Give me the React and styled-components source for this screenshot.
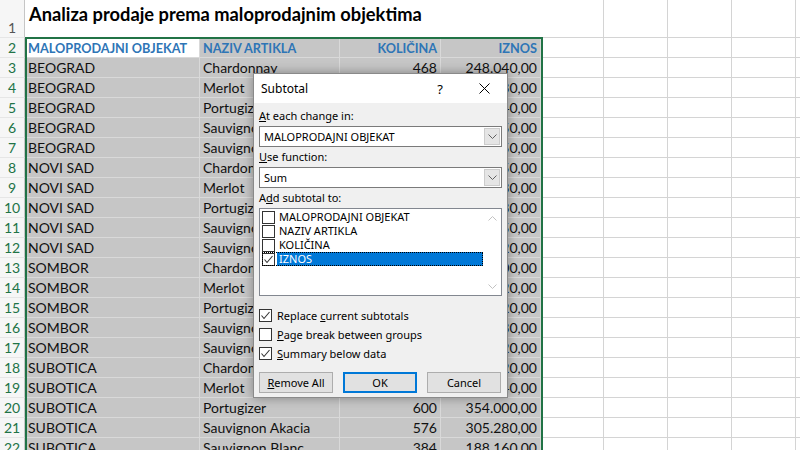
import React from 'react'
import styled, { createGlobalStyle } from 'styled-components'

const GlobalStyle = createGlobalStyle`
  html, body {
    margin: 0;
    padding: 0;
    background: #ffffff;
    overflow: hidden;
  }
`

const COLS = '25px 175px 140px 101px 100px 63px 64px 64px 64px 64px 64px'
const EMPTY_COLS = 6

const rows = [
  ['BEOGRAD', 'Chardonnay', '468', '248.040,00'],
  ['BEOGRAD', 'Merlot', '412', '218.430,00'],
  ['BEOGRAD', 'Portugizer', '380', '224.240,00'],
  ['BEOGRAD', 'Sauvignon Akacia', '520', '275.650,00'],
  ['BEOGRAD', 'Sauvignon Blanc', '330', '161.750,00'],
  ['NOVI SAD', 'Chardonnay', '420', '222.550,00'],
  ['NOVI SAD', 'Merlot', '350', '190.530,00'],
  ['NOVI SAD', 'Portugizer', '300', '177.030,00'],
  ['NOVI SAD', 'Sauvignon Akacia', '410', '217.350,00'],
  ['NOVI SAD', 'Sauvignon Blanc', '350', '171.520,00'],
  ['SOMBOR', 'Chardonnay', '380', '201.400,00'],
  ['SOMBOR', 'Merlot', '310', '170.520,00'],
  ['SOMBOR', 'Portugizer', '290', '171.120,00'],
  ['SOMBOR', 'Sauvignon Akacia', '460', '243.830,00'],
  ['SOMBOR', 'Sauvignon Blanc', '420', '205.820,00'],
  ['SUBOTICA', 'Chardonnay', '510', '270.320,00'],
  ['SUBOTICA', 'Merlot', '440', '242.440,00'],
  ['SUBOTICA', 'Portugizer', '600', '354.000,00'],
  ['SUBOTICA', 'Sauvignon Akacia', '576', '305.280,00'],
  ['SUBOTICA', 'Sauvignon Blanc', '384', '188.160,00'],
]

const Page = styled.div`
  position: relative;
  width: 800px;
  height: 450px;
  overflow: hidden;
  font-family: Lato, 'Liberation Sans', sans-serif;
`

const Sheet = styled.div`
  display: grid;
  grid-template-columns: ${COLS};
  grid-template-rows: 38px;
  grid-auto-rows: 20px;
`

const RowNum = styled.div`
  display: flex;
  align-items: ${p => (p.$tall ? 'flex-end' : 'center')};
  justify-content: center;
  padding-bottom: ${p => (p.$tall ? '1px' : '0')};
  background: #f6f6f6;
  border-right: 1px solid #c6c6c6;
  border-bottom: 1px solid #e6e6e6;
  color: ${p => (p.$selected ? '#217346' : '#555')};
  font-size: 14px;
  box-sizing: border-box;
`

const Title = styled.div`
  grid-column: span 4;
  padding: 0 4px;
  font-size: 18.3px;
  line-height: 28px;
  font-weight: 700;
  color: #000;
  white-space: nowrap;
  border-bottom: 1px solid #d4d4d4;
  box-sizing: border-box;
`

const Cell = styled.div`
  display: flex;
  align-items: center;
  justify-content: ${p => (p.$right ? 'flex-end' : 'flex-start')};
  padding: ${p => (p.$right ? '0 3px 0 0' : '0 0 0 3px')};
  background: ${p => (p.$selected ? (p.$active ? '#ffffff' : '#c6c6c6') : '#ffffff')};
  border-right: 1px solid ${p => (p.$selected ? '#d9d9d9' : '#d4d4d4')};
  border-bottom: 1px solid ${p => (p.$selected ? '#d9d9d9' : '#d4d4d4')};
  box-sizing: border-box;
  overflow: hidden;
  white-space: nowrap;
  font-size: ${p => (p.$head ? '12.7px' : '14px')};
  font-weight: ${p => (p.$head ? 700 : 400)};
  color: ${p => (p.$head ? '#2e75b6' : '#111')};
`

const Selection = styled.div`
  position: absolute;
  left: 25px;
  top: 37px;
  width: 518px;
  height: 430px;
  border: 2px solid #217346;
  box-sizing: border-box;
  pointer-events: none;
`

/* ---------- dialog ---------- */

const Dialog = styled.div`
  position: absolute;
  left: 253px;
  top: 73px;
  width: 255px;
  height: 325px;
  display: flex;
  flex-direction: column;
  border: 1px solid #8a8a8a;
  box-sizing: border-box;
  box-shadow: 0 0 10px rgba(0, 0, 0, 0.35);
  background: #f0f0f0;
  font-family: 'Noto Sans', 'Open Sans', sans-serif;
  font-size: 11px;
  color: #000;
`

const TitleBar = styled.div`
  height: 29px;
  display: flex;
  align-items: center;
  background: #ffffff;
  padding-left: 7px;
  font-size: 12px;
`

const TitleText = styled.span`
  flex: 1;
`

const TitleButton = styled.div`
  width: ${p => p.$w}px;
  display: flex;
  justify-content: center;
  align-items: center;
  font-size: 13px;
`

const Body = styled.div`
  flex: 1;
  display: flex;
  flex-direction: column;
  padding: 5px 5px 0 5px;
`

const Label = styled.div`
  height: 16px;
  line-height: 16px;
  margin-top: ${p => p.$mt || 0}px;
  margin-bottom: 2px;
`

const Combo = styled.div`
  height: 21px;
  display: flex;
  align-items: center;
  background: #fff;
  border: 1px solid #7a7a7a;
  box-sizing: border-box;
  padding: 1px;
`

const ComboText = styled.span`
  flex: 1;
  padding-left: 3px;
`

const ComboButton = styled.div`
  width: 16px;
  height: 100%;
  display: flex;
  align-items: center;
  justify-content: center;
  background: #e5e5e5;
  border: 1px solid #cccccc;
  box-sizing: border-box;
`

const ListBox = styled.div`
  height: 88px;
  display: flex;
  background: #fff;
  border: 1px solid #828790;
  box-sizing: border-box;
`

const ListItems = styled.div`
  flex: 1;
  padding: 1px 0 0 2px;
`

const ListItem = styled.div`
  height: 14px;
  display: flex;
  align-items: center;
  outline: ${p => (p.$focus ? '1px dotted #000' : 'none')};
  outline-offset: -1px;
`

const ItemText = styled.span`
  height: 14px;
  line-height: 14px;
  flex: 1;
  margin-left: 2px;
  padding-left: 2px;
  background: ${p => (p.$sel ? '#0078d7' : 'transparent')};
  color: ${p => (p.$sel ? '#fff' : '#000')};
`

const ScrollBar = styled.div`
  width: 18px;
  display: flex;
  flex-direction: column;
  justify-content: space-between;
  align-items: center;
  padding: 7px 0 6px;
`

const Box = styled.span`
  width: ${p => p.$size}px;
  height: ${p => p.$size}px;
  flex: none;
  display: flex;
  align-items: center;
  justify-content: center;
  background: #fff;
  border: 1px solid #333;
  box-sizing: border-box;
`

const CheckRow = styled.div`
  height: 19px;
  line-height: 15px;
  display: flex;
  align-items: center;
  gap: 5px;
  margin-top: ${p => p.$mt || 0}px;
`

const Buttons = styled.div`
  display: flex;
  justify-content: space-between;
  margin-top: 9px;
  padding-right: 1px;
`

const Button = styled.div`
  width: ${p => p.$w}px;
  height: 21px;
  display: flex;
  align-items: center;
  justify-content: center;
  background: #e1e1e1;
  border: ${p => (p.$default ? '2px solid #0078d7' : '1px solid #adadad')};
  box-sizing: border-box;
`

const Check = () => (
  <svg width="11" height="11" viewBox="0 0 11 11">
    <polyline points="1.5,5.5 4,8.5 9.5,2" fill="none" stroke="#333" strokeWidth="1.1" />
  </svg>
)

const CheckBox = ({ checked, size = 13 }) => (
  <Box $size={size}>{checked && <Check />}</Box>
)

const Chevron = ({ up, color = '#606060' }) => (
  <svg width="9" height="5" viewBox="0 0 9 5">
    <polyline
      points={up ? '0.5,4.5 4.5,0.5 8.5,4.5' : '0.5,0.5 4.5,4.5 8.5,0.5'}
      fill="none"
      stroke={color}
      strokeWidth="1"
    />
  </svg>
)

const listItems = [
  { label: 'MALOPRODAJNI OBJEKAT' },
  { label: 'NAZIV ARTIKLA' },
  { label: 'KOLIČINA' },
  { label: 'IZNOS', checked: true, selected: true },
]

const SubtotalDialog = () => (
  <Dialog>
    <TitleBar>
      <TitleText>Subtotal</TitleText>
      <TitleButton $w={42}>?</TitleButton>
      <TitleButton $w={46}>
        <svg width="11" height="11" viewBox="0 0 11 11">
          <path d="M0.5 0.5 L10.5 10.5 M10.5 0.5 L0.5 10.5" stroke="#000" strokeWidth="1" />
        </svg>
      </TitleButton>
    </TitleBar>
    <Body>
      <Label>
        <u>A</u>t each change in:
      </Label>
      <Combo>
        <ComboText>MALOPRODAJNI OBJEKAT</ComboText>
        <ComboButton>
          <Chevron />
        </ComboButton>
      </Combo>
      <Label $mt={2}>
        <u>U</u>se function:
      </Label>
      <Combo>
        <ComboText>Sum</ComboText>
        <ComboButton>
          <Chevron />
        </ComboButton>
      </Combo>
      <Label $mt={2}>
        A<u>d</u>d subtotal to:
      </Label>
      <ListBox>
        <ListItems>
          {listItems.map(it => (
            <ListItem key={it.label} $focus={it.selected}>
              <CheckBox checked={it.checked} size={13} />
              <ItemText $sel={it.selected}>{it.label}</ItemText>
            </ListItem>
          ))}
        </ListItems>
        <ScrollBar>
          <Chevron up color="#c2c2c2" />
          <Chevron color="#c2c2c2" />
        </ScrollBar>
      </ListBox>
      <CheckRow $mt={10}>
        <CheckBox checked />
        <span>
          Replace <u>c</u>urrent subtotals
        </span>
      </CheckRow>
      <CheckRow>
        <CheckBox />
        <span>
          <u>P</u>age break between groups
        </span>
      </CheckRow>
      <CheckRow>
        <CheckBox checked />
        <span>
          <u>S</u>ummary below data
        </span>
      </CheckRow>
      <Buttons>
        <Button $w={74}>
          <span>
            <u>R</u>emove All
          </span>
        </Button>
        <Button $w={74} $default>
          OK
        </Button>
        <Button $w={74}>Cancel</Button>
      </Buttons>
    </Body>
  </Dialog>
)

const EmptyCells = () =>
  Array.from({ length: EMPTY_COLS }, (_, i) => <Cell key={'e' + i} />)

export default function App() {
  return (
    <Page>
      <GlobalStyle />
      <Sheet>
        <RowNum $tall>1</RowNum>
        <Title>Analiza prodaje prema maloprodajnim objektima</Title>
        <EmptyCells />

        <RowNum $selected>2</RowNum>
        <Cell $selected $active $head>MALOPRODAJNI OBJEKAT</Cell>
        <Cell $selected $head>NAZIV ARTIKLA</Cell>
        <Cell $selected $head $right>KOLIČINA</Cell>
        <Cell $selected $head $right>IZNOS</Cell>
        <EmptyCells />

        {rows.map((r, i) => (
          <React.Fragment key={i}>
            <RowNum $selected>{i + 3}</RowNum>
            <Cell $selected>{r[0]}</Cell>
            <Cell $selected>{r[1]}</Cell>
            <Cell $selected $right>{r[2]}</Cell>
            <Cell $selected $right>{r[3]}</Cell>
            <EmptyCells />
          </React.Fragment>
        ))}
      </Sheet>
      <Selection />
      <SubtotalDialog />
    </Page>
  )
}
